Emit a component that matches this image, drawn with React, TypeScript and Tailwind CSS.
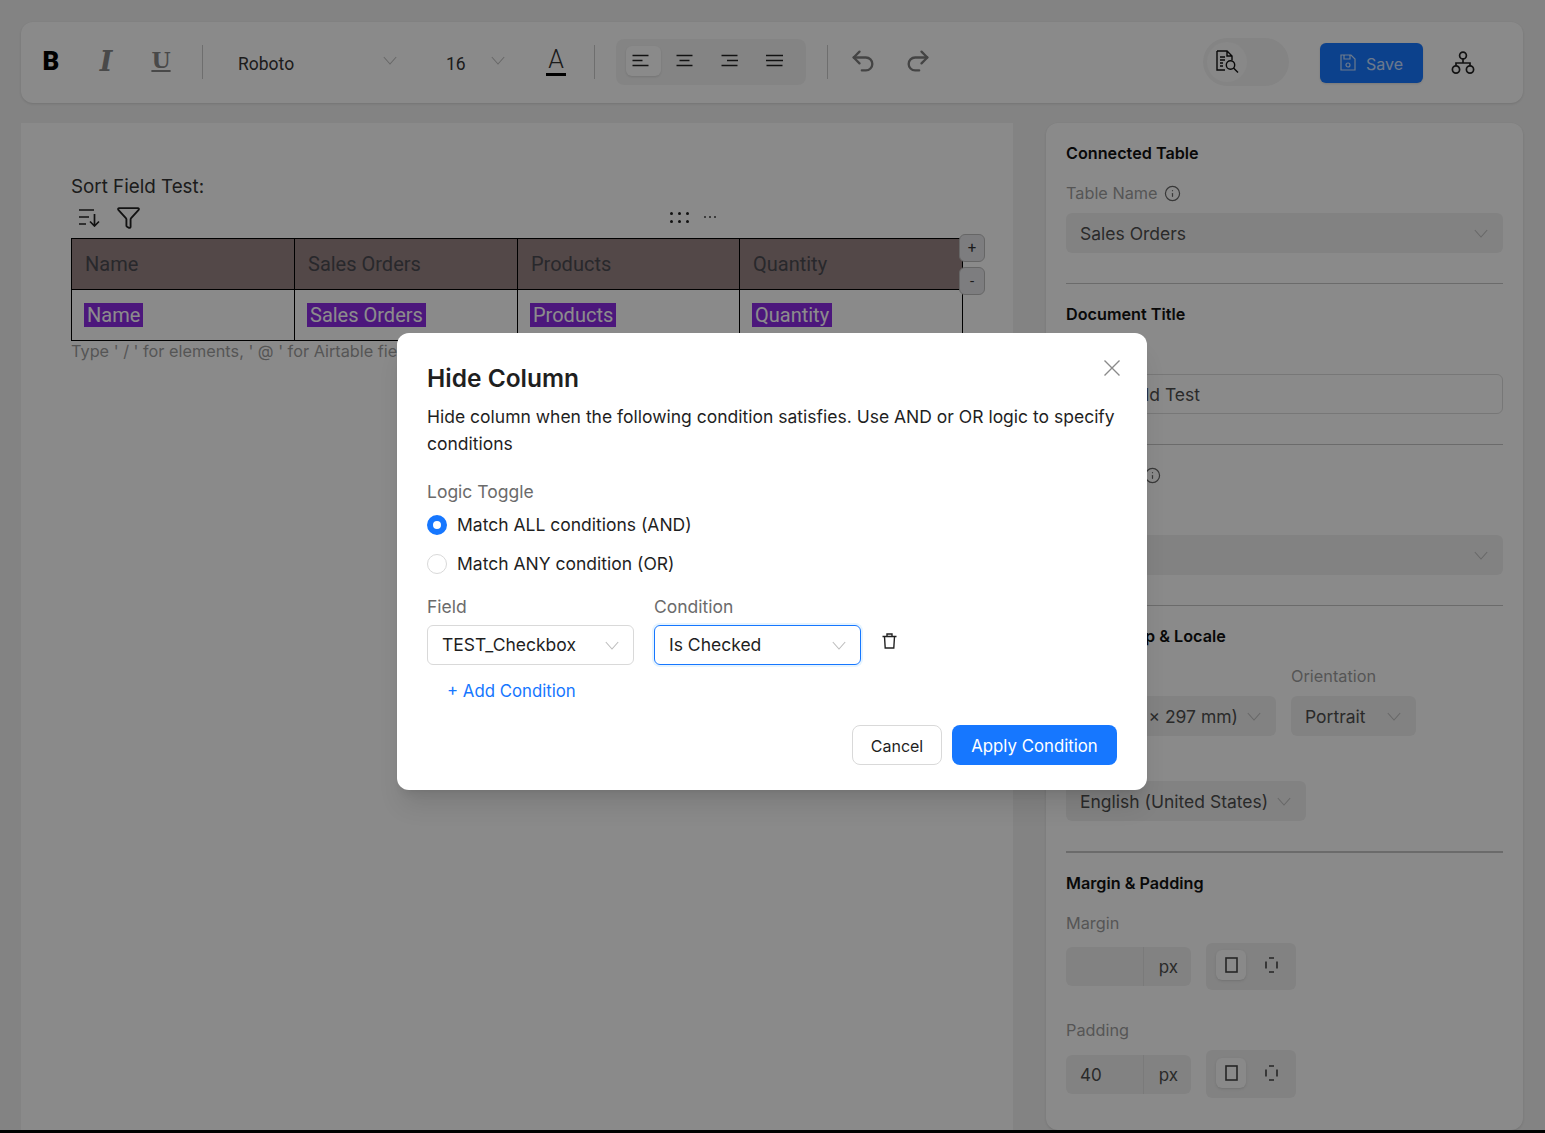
import React from "react";
import { Funnel, Info, Redo2, Undo2 } from "lucide-react";

const Chev = ({ className = "" }: { className?: string }) => (
  <svg width="14" height="9" viewBox="0 0 14 9" fill="none" className={"shrink-0 " + className}>
    <path d="M0.8 1 L7 8 L13.2 1" stroke="#bdbdbd" strokeWidth="1.1" />
  </svg>
);

const AlignIcon = ({ kind }: { kind: "left" | "center" | "right" | "justify" }) => {
  const mid = { left: "M0.5 6.5h10", center: "M3.5 6.5h10", right: "M6 6.5h11", justify: "M0 6.5h17" }[kind];
  return (
    <svg width="17" height="13" viewBox="0 0 17 13" fill="none" stroke="#222" strokeWidth="1.5">
      <path d={kind === "justify" ? "M0 1.5h17" : "M0.5 1.5h16"} />
      <path d={mid} />
      <path d="M0.5 11.5h16" />
    </svg>
  );
};

const SortIcon = () => (
  <svg width="23" height="20" viewBox="0 0 23 20" fill="none" stroke="#222" strokeWidth="1.7">
    <path d="M1 3h15M1 10h10M1 17h7" />
    <path d="M16.5 7v12M12 14.5l4.5 4.5 4.5-4.5" />
  </svg>
);

const DocSearch = () => (
  <svg width="25" height="24" viewBox="0 0 25 24" fill="none" stroke="#111" strokeWidth="1.4">
    <path d="M2 1h10l5 5v4M12 1v5h5M2 1v19h8" />
    <path d="M5 7h5M5 10h5M5 13h3M5 16h3" />
    <circle cx="15.5" cy="15" r="4.2" />
    <path d="M18.5 18l4.5 4.5" />
  </svg>
);

const OrgIcon = () => (
  <svg width="24" height="26" viewBox="0 0 24 26" fill="none" stroke="#222" strokeWidth="1.7">
    <circle cx="12" cy="5.5" r="3.4" />
    <circle cx="5" cy="19.5" r="3.6" />
    <circle cx="19" cy="19.5" r="3.6" />
    <path d="M12 9v4M5 16v-3h14v3" />
  </svg>
);

const SaveIcon = () => (
  <svg width="16" height="17" viewBox="0 0 16 17" fill="none" stroke="#fff" strokeOpacity="0.75" strokeWidth="1.2">
    <path d="M1 1h10l4 4v11H1z" />
    <path d="M4 1v4h6V1" />
    <circle cx="8" cy="11" r="2" />
  </svg>
);

const TrashIcon = () => (
  <svg width="15" height="16" viewBox="0 0 15 16" fill="none" stroke="#222" strokeWidth="1.4">
    <path d="M0.5 3.5h14M5 3.5V1h5v2.5M2.5 3.5l.7 11.5h8.6l.7-11.5" />
  </svg>
);

const RectIcon = ({ dashed }: { dashed?: boolean }) => (
  <svg width="13" height="16" viewBox="0 0 13 16" fill="none" stroke="#444" strokeWidth="1.6">
    {dashed ? (
      <path d="M4 1h5M4 15h5M1 4.5v7M12 4.5v7" />
    ) : (
      <rect x="1" y="1" width="11" height="14" />
    )}
  </svg>
);

const Divider = () => <div className="h-[34px] w-px bg-[#c8c8c8] shrink-0 -mt-[2px]" />;

const Select = ({ text, className = "" }: { text: string; className?: string }) => (
  <div className={"h-10 rounded-md bg-[#ededed] flex items-center justify-between pl-[14px] pr-[15px] text-[17.5px] text-[#4d4d4d] whitespace-nowrap " + className}>
    <span className="overflow-hidden pt-[2px]">{text}</span>
    <Chev />
  </div>
);

const SectionTitle = ({ children, className = "" }: { children: React.ReactNode; className?: string }) => (
  <div className={"h-6 leading-6 text-[16.2px] font-semibold text-[#111] " + className}>{children}</div>
);

const Label = ({ children, className = "" }: { children?: React.ReactNode; className?: string }) => (
  <div className={"h-5 leading-5 text-[16.3px] text-[#9c9c9c] " + className}>{children}</div>
);

const Rule = ({ className = "" }: { className?: string }) => <div className={"h-px bg-[#c4c4c4] " + className} />;

const SizeRow = ({ value, second, className = "" }: { value: string; second?: boolean; className?: string }) => (
  <div className={"flex items-start " + className}>
    <div className={"w-[125px] h-[39px] rounded-md bg-[#ededed] flex overflow-hidden text-[17px] " + (second ? "mt-[5px]" : "mt-[4px]")}>
      <div className="w-[78px] pl-[14px] pt-[3px] flex items-center text-[#4d4d4d] border-r border-[#dedede]">{value}</div>
      <div className="flex-1 pl-[2px] pt-[3px] flex items-center justify-center text-[#4d4d4d]">px</div>
    </div>
    <div className={"ml-[15px] w-[90px] rounded-md bg-[#ededed] flex pl-[10px] " + (second ? "h-[48px] pt-2" : "h-[47px] pt-[7px]")}>
      <div className="w-[30px] h-[30px] rounded-md bg-[#fafafa] shadow-sm flex items-center justify-center">
        <RectIcon />
      </div>
      <div className="w-[10px]" />
      <div className="w-[30px] h-[30px] flex items-center justify-center">
        <RectIcon dashed />
      </div>
    </div>
  </div>
);

const Th = ({ children, last }: { children: string; last?: boolean }) => (
  <div className={"flex items-center pl-[13px] bg-[#988383] text-[20px] text-[#4a4a50] " + (last ? "" : "border-r border-black")}>{children}</div>
);

const Td = ({ children, last }: { children: string; last?: boolean }) => (
  <div className={"flex items-center pl-3 text-[20px] " + (last ? "" : "border-r border-black")}>
    <span className="bg-[#8a2be2] text-white px-[3px] leading-6">{children}</span>
  </div>
);

export default function App() {
  return (
    <div className="relative h-[1133px] overflow-hidden bg-[#efefef] text-black" style={{ fontFamily: "Inter, sans-serif" }}>
      <div className="h-[1130px] px-[21px] pt-[22px] flex flex-col">
        {/* toolbar */}
        <div className="h-[81px] shrink-0 w-[1502px] rounded-xl bg-[#fcfcfc] shadow-sm flex items-center" style={{ fontFamily: "Roboto, sans-serif" }}>
          <div className="w-[60px] text-center text-[26px] font-black leading-none text-black -mt-[3px]">B</div>
          <div className="w-[50px] text-center text-[27px] font-bold italic leading-none text-[#858585] -mt-[3px]" style={{ fontFamily: "'DejaVu Serif', serif" }}>I</div>
          <div className="w-[60px] text-center text-[22px] font-bold underline leading-none text-[#858585] -mt-[5px]" style={{ fontFamily: "'DejaVu Serif', serif" }}>U</div>
          <div className="ml-[11px]"><Divider /></div>
          <div className="ml-[35px] w-[145px] text-[17.5px] text-[#333] leading-none mt-[4px]">Roboto</div>
          <Chev className="-mt-[4px]" />
          <div className="ml-[49px] w-[45px] text-[17.5px] text-[#333] leading-none mt-[4px]">16</div>
          <Chev className="-mt-[4px]" />
          <div className="ml-[41px] w-5 flex flex-col items-center text-[#333] -mt-[2px]">
            <span className="text-[25px] leading-[26px] font-light">A</span>
            <span className="w-5 h-[3px] bg-black" />
          </div>
          <div className="ml-[28px]"><Divider /></div>
          <div className="ml-[21px] w-[190px] h-[46px] rounded-lg bg-[#f1f1f1] flex items-center pl-[10px] -mt-[1px]">
            <div className="w-[35px] h-[30px] pr-[6px] rounded-md bg-[#fcfcfc] shadow-sm flex items-center justify-center -mt-[3px]"><AlignIcon kind="left" /></div>
            <div className="w-[45px] ml-[1px] flex justify-center -mt-[3px]"><AlignIcon kind="center" /></div>
            <div className="w-[45px] flex justify-center -mt-[3px]"><AlignIcon kind="right" /></div>
            <div className="w-[45px] flex justify-center -mt-[3px]"><AlignIcon kind="justify" /></div>
          </div>
          <div className="ml-[21px]"><Divider /></div>
          <Undo2 size={28} strokeWidth={2} className="ml-[21px] text-[#7d7d7d] -mt-[3px]" />
          <Redo2 size={28} strokeWidth={2} className="ml-[27px] text-[#7d7d7d] -mt-[3px]" />
          <div className="ml-[271px] w-[86px] h-12 rounded-full bg-[#f1f1f1] flex items-center pl-[4px] -mt-[2px]">
            <div className="w-[40px] h-[40px] rounded-full bg-[#f7f7f7] flex items-center justify-center"><DocSearch /></div>
          </div>
          <div className="ml-[31px] w-[103px] h-10 rounded-md bg-[#1677ff] shadow-sm flex items-center justify-center gap-[10px] text-white text-[16px]" style={{ fontFamily: "Inter, sans-serif" }}>
            <SaveIcon />
            <span className="opacity-75 pt-[2px]">Save</span>
          </div>
          <div className="ml-[28px]"><OrgIcon /></div>
        </div>

        <div className="mt-5 flex-1 flex min-h-0">
          {/* document */}
          <div className="relative w-[992px] bg-[#fcfcfc] pt-[50px] pl-[50px]">
            <div className="h-[27px] leading-[27px] text-[18.8px] text-[#333]">Sort Field Test:</div>
            <div className="h-[38px] pb-[4px] flex items-center pl-[7px] text-[#222]">
              <SortIcon />
              <Funnel size={25} strokeWidth={1.8} className="ml-[15px]" />
              <div className="ml-[529px] grid grid-cols-3 gap-x-[5px] gap-y-[5px]">
                {[0, 1, 2, 3, 4, 5].map((i) => (
                  <span key={i} className="w-[3px] h-[3px] rounded-full bg-[#222]" />
                ))}
              </div>
              <div className="ml-[15px] flex gap-[3px]">
                {[0, 1, 2].map((i) => (
                  <span key={i} className="w-[2px] h-[2px] rounded-full bg-[#444]" />
                ))}
              </div>
            </div>
            <div className="relative w-[892px]" style={{ fontFamily: "Roboto, sans-serif" }}>
              <div className="border border-black grid grid-cols-[223px_223px_222px_1fr] grid-rows-[50px_51px]">
                <Th>Name</Th>
                <Th>Sales Orders</Th>
                <Th>Products</Th>
                <Th last>Quantity</Th>
                <div className="col-span-4 row-start-2 grid grid-cols-subgrid border-t border-black">
                  <Td>Name</Td>
                  <Td>Sales Orders</Td>
                  <Td>Products</Td>
                  <Td last>Quantity</Td>
                </div>
              </div>
              <div className="absolute left-[888px] -top-1 w-[26px] h-7 rounded-md border border-[#bbb] bg-[#e4e4e8] flex items-center justify-center text-[15px] text-[#333]">+</div>
              <div className="absolute left-[888px] top-[29px] w-[26px] h-7 rounded-md border border-[#bbb] bg-[#e4e4e8] flex items-center justify-center text-[15px] text-[#333]">-</div>
            </div>
            <div className="text-[16.3px] leading-5 text-[#9c9c9c]">Type ' / ' for elements, ' @ ' for Airtable fields</div>
          </div>

          {/* sidebar */}
          <div className="ml-[33px] w-[477px] rounded-xl bg-[#fcfcfc] shadow-sm px-5 pt-[18px]">
            <SectionTitle>Connected Table</SectionTitle>
            <Label className="mt-[18px] flex items-center gap-[6px]">Table Name <Info size={17} strokeWidth={1.7} className="text-[#666]" /></Label>
            <Select text="Sales Orders" className="mt-[10px]" />
            <Rule className="mt-[30px]" />
            <SectionTitle className="mt-[18px]">Document Title</SectionTitle>
            <Label className="mt-[18px]">Title</Label>
            <div className="mt-[10px] h-10 pt-[2px] rounded-md border border-[#d9d9d9] flex items-center pl-[14px] text-[17.5px] text-[#4d4d4d]">Sort Field Test</div>
            <Rule className="mt-[30px]" />
            <Label className="mt-5 flex items-center gap-[7px]">Font Size <Info size={17} strokeWidth={1.7} className="text-[#666]" /></Label>
            <Select text="16" className="mt-[50px]" />
            <Rule className="mt-[30px]" />
            <SectionTitle className="mt-[18px]">Page Setup &amp; Locale</SectionTitle>
            <div className="mt-[18px] flex">
              <div className="w-[210px]">
                <Label />
                <Select text="A4 (210 × 297 mm)" className="mt-[10px] w-[210px]" />
              </div>
              <div className="ml-[15px] w-[125px]">
                <Label>Orientation</Label>
                <Select text="Portrait" className="mt-[10px]" />
              </div>
            </div>
            <Label className="mt-[15px]" />
            <Select text="English (United States)" className="mt-[10px] w-[240px]" />
            <div className="mt-[30px] h-[2px] bg-[#c4c4c4]" />
            <SectionTitle className="mt-[18px]">Margin &amp; Padding</SectionTitle>
            <Label className="mt-[18px]">Margin</Label>
            <SizeRow value="" className="mt-[10px]" />
            <Label className="mt-[30px]">Padding</Label>
            <SizeRow value="40" second className="mt-[10px]" />
          </div>
        </div>
      </div>
      <div className="h-[3px] bg-black" />

      {/* overlay */}
      <div className="absolute inset-0 bg-black/45" />
      <div className="absolute left-[397px] top-[333px] w-[750px] h-[457px] rounded-xl bg-white shadow-xl px-[30px] pt-[27px] text-[#1f1f1f]">
        <svg width="16" height="16" viewBox="0 0 16 16" fill="none" stroke="#8a8a8a" strokeWidth="1.4" className="absolute right-[27px] top-[27px]">
          <path d="M0.5 0.5l15 15M15.5 0.5l-15 15" />
        </svg>
        <div className="text-[24.5px] leading-[36px] font-semibold text-[#1f1f1f]">Hide Column</div>
        <p className="mt-[7px] text-[17.5px] leading-[27px] text-[#1f1f1f]">
          Hide column when the following condition satisfies. Use AND or OR logic to specify conditions
        </p>
        <div className="mt-[23px] h-6 leading-6 text-[17.5px] text-[#6b6b6b]">Logic Toggle</div>
        <div className="mt-[9px] h-[24px] flex items-center gap-[10px] text-[17.5px]">
          <span className="w-5 h-5 rounded-full border-[6px] border-[#1677ff] bg-white" />
          Match ALL conditions (AND)
        </div>
        <div className="mt-[15px] h-[24px] flex items-center gap-[10px] text-[17.5px]">
          <span className="w-5 h-5 rounded-full border border-[#d9d9d9] bg-white" />
          Match ANY condition (OR)
        </div>
        <div className="mt-[19px] flex text-[17.5px] text-[#6b6b6b] h-6 leading-6">
          <div className="w-[227px]">Field</div>
          <div>Condition</div>
        </div>
        <div className="mt-[6px] flex">
          <div className="w-[207px] h-10 rounded-md border border-[#d9d9d9] flex items-center justify-between pl-[14px] pr-[14px] text-[17.5px]">
            TEST_Checkbox
            <Chev />
          </div>
          <div className="ml-[20px] w-[207px] h-10 rounded-md border border-[#1677ff] shadow-[0_0_0_2px_rgba(5,145,255,0.1)] flex items-center justify-between pl-[14px] pr-[14px] text-[17.5px]">
            Is Checked
            <Chev />
          </div>
          <div className="ml-[21px] mt-[8px]"><TrashIcon /></div>
        </div>
        <div className="mt-[14px] ml-5 h-6 leading-6 text-[16.8px] text-[#1677ff]">+ Add Condition</div>
        <div className="mt-[22px] flex justify-end gap-[10px]">
          <div className="w-[90px] h-10 pt-[2px] rounded-lg border border-[#d9d9d9] flex items-center justify-center text-base">Cancel</div>
          <div className="w-[165px] h-10 pt-[3px] rounded-lg bg-[#1677ff] text-white flex items-center justify-center text-[16.8px]">Apply Condition</div>
        </div>
      </div>
    </div>
  );
}
